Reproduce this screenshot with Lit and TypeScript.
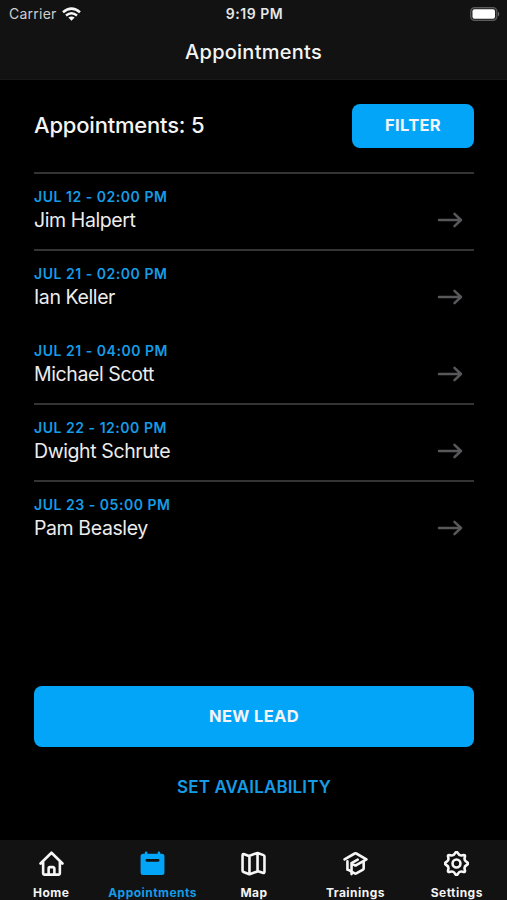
import { LitElement, html, css, svg, nothing } from "lit";
import { customElement } from "lit/decorators.js";
import { classMap } from "lit/directives/class-map.js";

const APPOINTMENTS = [
  { time: "JUL 12 - 02:00 PM", name: "Jim Halpert", sameDay: false },
  { time: "JUL 21 - 02:00 PM", name: "Ian Keller", sameDay: false },
  { time: "JUL 21 - 04:00 PM", name: "Michael Scott", sameDay: true },
  { time: "JUL 22 - 12:00 PM", name: "Dwight Schrute", sameDay: false },
  { time: "JUL 23 - 05:00 PM", name: "Pam Beasley", sameDay: false },
];

// Eight rounded teeth: quadratic curves through the midpoints of a 16-point star.
function gearPath(center: number, outer: number, inner: number): string {
  const pts = Array.from({ length: 16 }, (_, i) => {
    const r = i % 2 ? inner : outer;
    const a = (i * Math.PI) / 8 - Math.PI / 2;
    return [center + r * Math.cos(a), center + r * Math.sin(a)];
  });
  const mid = (i: number) => {
    const [a, b] = [pts[i % 16], pts[(i + 1) % 16]];
    return `${((a[0] + b[0]) / 2).toFixed(2)} ${((a[1] + b[1]) / 2).toFixed(2)}`;
  };
  return (
    `M${mid(15)}` +
    pts.map((p, i) => `Q${p[0].toFixed(2)} ${p[1].toFixed(2)} ${mid(i)}`).join("") +
    "Z"
  );
}

const TABS = [
  {
    label: "Home",
    icon: svg`<path d="M1.600 13 13 1.800 24.400 13M4.300 10.800V23.200a1.400 1.400 0 0 0 1.400 1.400h14.600a1.400 1.400 0 0 0 1.400-1.400V10.800M10 24.200v-6a1.400 1.400 0 0 1 1.400-1.400h3.200a1.400 1.400 0 0 1 1.400 1.400v6"/>`,
  },
  {
    label: "Appointments",
    active: true,
    icon: svg`<path class="solid" fill-rule="evenodd" d="M3.200 2.800H5V1.700a1.300 1.300 0 0 1 2.600 0v1.100h10.800V1.700a1.300 1.300 0 0 1 2.600 0v1.100h1.800a2.600 2.600 0 0 1 2.600 2.600v17a2.600 2.600 0 0 1-2.600 2.600H3.200a2.600 2.600 0 0 1-2.600-2.600v-17a2.600 2.600 0 0 1 2.600-2.600ZM7.200 8.200a1.500 1.500 0 0 0 0 3h11.600a1.500 1.500 0 0 0 0-3Z"/>`,
  },
  {
    label: "Map",
    icon: svg`<path d="M1.600 4.600q0-2 1.900-1.300l4.700 1.900 8.200-2.900q.8-.3 1.600 0l5.400 2q1 .4 1 1.500v15.600q0 2-1.900 1.300l-4.700-1.700-8.200 3q-.8.300-1.600 0l-5.400-2.200q-1-.4-1-1.500ZM8.800 5.200v18.500M17.200 2.500v18.300"/>`,
  },
  {
    label: "Trainings",
    icon: svg`<path d="M1.600 8.600 12.200 2.600q.8-.4 1.600 0L24.400 8.600 13.800 14.800q-.8.400-1.600 0L9.600 13.300M4.600 10.800v8.600M8.900 12.600V24M8.900 12.600 15.300 9M4.600 19l7.600 4.300q.8.400 1.600 0l7-4q.7-.4.7-1.200v-7.300"/>`,
  },
  {
    label: "Settings",
    icon: svg`<circle cx="13" cy="13" r="4.100"/><path d=${gearPath(13, 13.600, 8.200)} />`,
  },
];

@customElement("app-root")
export class AppRoot extends LitElement {
  static styles = css`
    :host {
      display: flex;
      flex-direction: column;
      height: 900px;
      overflow: hidden;
      background: #000;
      color: #f4f4f4;
      font-family: Inter, "Liberation Sans", sans-serif;
    }
    * { box-sizing: border-box; }
    button { border: 0; padding: 0; font: inherit; color: inherit; background: none; }
    svg { display: block; flex: none; }
    .top { height: 80px; background: #121212; border-bottom: 1px solid #191919; }
    .status {
      display: grid;
      grid-template-columns: 1fr auto 1fr;
      align-items: center;
      height: 27px;
      padding: 0 7px 0 9px;
      font-size: 14px;
      line-height: 27px;
      white-space: nowrap;
    }
    .carrier { display: flex; align-items: center; gap: 5px; color: #cfcfcf; letter-spacing: 0.25px; }
    .clock { font-weight: 600; font-size: 14px; letter-spacing: 0.5px; color: #e6e6e6; }
    .battery { justify-self: end; }
    .title {
      margin: 0;
      text-align: center;
      font-size: 20px;
      line-height: 51px;
      font-weight: 500;
      letter-spacing: 0.25px;
    }
    .content { flex: 1; display: flex; flex-direction: column; padding: 23px 33px 0 34px; }
    .summary { display: flex; justify-content: space-between; align-items: center; height: 45px; }
    .count { margin: 0; font-size: 22px; line-height: 26px; padding-bottom: 1px; font-weight: 500; letter-spacing: -0.2px; }
    .primary { background: #03a5f8; border-radius: 8px; font-weight: 700; font-size: 16.500px; letter-spacing: 0.35px; padding-bottom: 2px; }
    .filter { width: 122px; height: 44px; }
    .list { list-style: none; margin: 24px 0 0; padding: 0; }
    .row {
      display: flex;
      justify-content: space-between;
      height: 77px;
      padding: 14px 11px 0 0;
      border-top: 2px solid #343434;
    }
    .row.joined { border-top-color: transparent; }
    .time { color: #159ce6; font-size: 14px; line-height: 17px; font-weight: 600; letter-spacing: 0.53px; }
    .name { font-size: 19.500px; line-height: 30px; color: #ececec; letter-spacing: -0.4px; }
    .arrow { margin-top: 20px; fill: none; stroke: #58585a; stroke-width: 2.500; stroke-linecap: round; stroke-linejoin: round; }
    .actions { margin-top: auto; height: 154px; display: flex; flex-direction: column; }
    .lead { height: 61px; }
    .availability { height: 40px; margin-top: 20px; color: #159ce6; font-size: 17px; font-weight: 600; letter-spacing: 0.13px; }
    .tabs { height: 60px; display: grid; grid-template-columns: repeat(5, 1fr); background: #121212; }
    .tab {
      display: flex;
      flex-direction: column;
      align-items: center;
      padding: 11px 0 0 1px;
      font-size: 12px;
      line-height: 16px;
      font-weight: 700;
      letter-spacing: 0.47px;
    }
    .tab.active { color: #159ce6; }
    .glyph { fill: none; stroke: #f6f6f6; stroke-width: 2.700; stroke-linecap: round; stroke-linejoin: round; margin-bottom: 9px; }
    .solid { fill: #03a5f8; stroke: none; }
  `;

  render() {
    return html`
      <header class="top">
        <div class="status">
          <div class="carrier">
            Carrier
            <svg width="19" height="14" viewBox="0 0 19 14" fill="none" stroke="#f6f6f6" stroke-width="2.500">
              <path d="M1 5.300Q9.500-2 18 5.300M4 8.500Q9.500 4 15 8.500" />
              <path d="M6.400 10.600Q9.500 8.300 12.600 10.600L9.500 13.800Z" fill="#f6f6f6" stroke="none" />
            </svg>
          </div>
          <div class="clock">9:19 PM</div>
          <svg class="battery" width="30" height="14" viewBox="0 0 30 14">
            <rect x=".7" y=".6" width="26.200" height="12.800" rx="4" fill="#222" stroke="#5c5c5c" stroke-width="1.200" />
            <rect x="2.500" y="2.200" width="22.500" height="9.600" rx="2" fill="#fff" />
            <path d="M28 4.500Q30.600 7 28 9.500Z" fill="#6a6a6a" />
          </svg>
        </div>
        <h1 class="title">Appointments</h1>
      </header>
      <main class="content">
        <div class="summary">
          <h2 class="count">Appointments: ${APPOINTMENTS.length}</h2>
          <button class="primary filter">FILTER</button>
        </div>
        <ul class="list">
          ${APPOINTMENTS.map(
            (a) => html`
              <li class=${classMap({ row: true, joined: a.sameDay })}>
                <div>
                  <div class="time">${a.time}</div>
                  <div class="name">${a.name}</div>
                </div>
                <svg class="arrow" width="26" height="24" viewBox="0 0 26 24">
                  <path d="M2 12H24M17.500 5.800 24 12 17.500 18.200" />
                </svg>
              </li>
            `
          )}
        </ul>
        <div class="actions">
          <button class="primary lead">NEW LEAD</button>
          <button class="availability">SET AVAILABILITY</button>
        </div>
      </main>
      <nav class="tabs">
        ${TABS.map(
          (t) => html`
            <div class=${classMap({ tab: true, active: !!t.active })} aria-current=${t.active ? "page" : nothing}>
              <svg class="glyph" width="25" height="25" viewBox="0 0 26 26">${t.icon}</svg>
              ${t.label}
            </div>
          `
        )}
      </nav>
    `;
  }
}
